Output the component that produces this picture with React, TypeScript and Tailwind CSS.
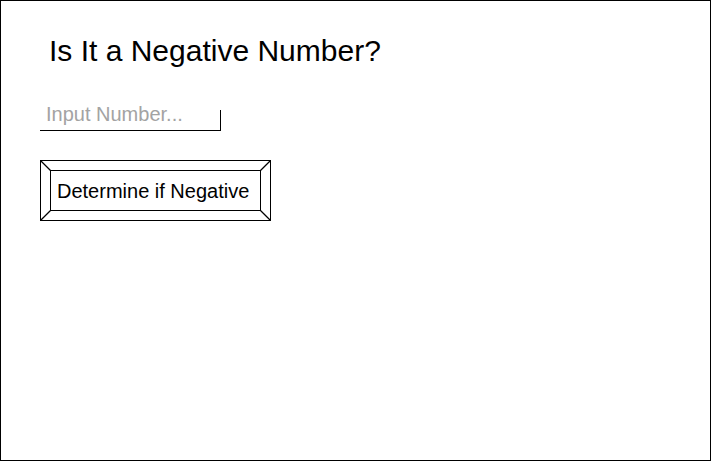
import { useState, type FormEvent } from "react";

export default function App() {
  const [value, setValue] = useState("");
  const submit = (e: FormEvent) => e.preventDefault();

  return (
    <div className="h-screen bg-white pb-px font-['Liberation_Sans',Arial,sans-serif] text-black">
      <main className="h-full border border-black px-[39px] pt-7">
        <h1 className="pl-[9px] text-[30px] leading-11">Is It a Negative Number?</h1>
        <form onSubmit={submit} className="flex flex-col items-start pt-[37px]">
          <div className="flex h-[21px] w-[181px] items-end border-r border-b border-black">
            <input
              aria-label="Input Number"
              placeholder="Input Number..."
              value={value}
              onChange={(e) => setValue(e.target.value)}
              className="h-7 w-full bg-transparent pb-1 pl-1.5 text-xl leading-6 outline-none placeholder:text-[#a3a3a3]"
            />
          </div>
          <button type="submit" className="relative mt-[29px] h-[61px] w-[231px] border border-black p-[9px] text-xl">
            <svg className="absolute inset-0 h-full w-full" viewBox="0 0 229 59" fill="none" stroke="black" strokeWidth="1.3" aria-hidden="true">
              <path d="M-.5-.5l10 10M229.5-.5l-10 10M-.5 59.5l10-10M229.5 59.5l-10-10" />
            </svg>
            <span className="flex h-full items-center border border-black pl-1.5 whitespace-nowrap">
              Determine if Negative
            </span>
          </button>
        </form>
      </main>
    </div>
  );
}
